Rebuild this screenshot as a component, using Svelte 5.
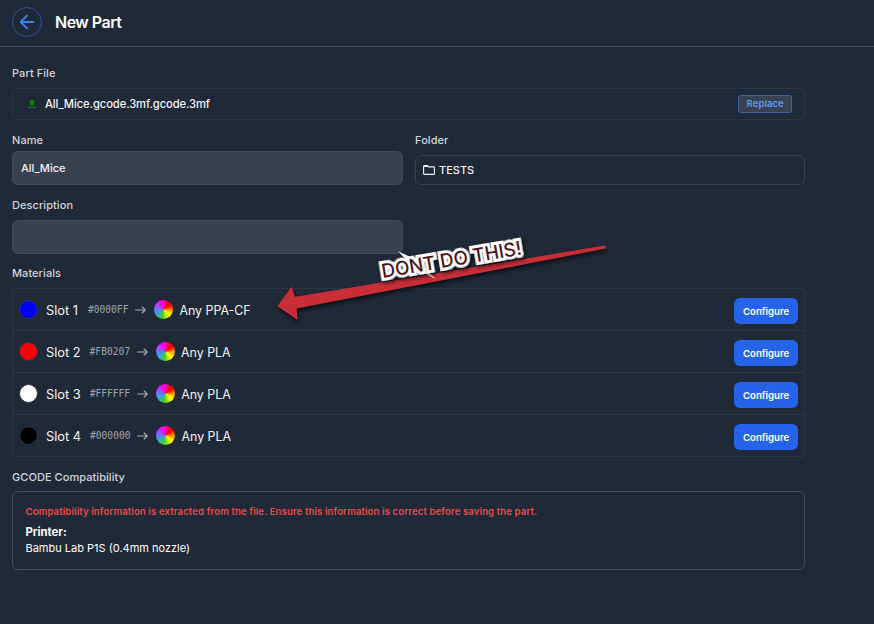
<script>
  const slots = [
    { name: 'Slot 1', color: '#0000FF', material: 'Any PPA-CF' },
    { name: 'Slot 2', color: '#FB0207', material: 'Any PLA' },
    { name: 'Slot 3', color: '#FFFFFF', material: 'Any PLA' },
    { name: 'Slot 4', color: '#000000', material: 'Any PLA' }
  ];
</script>

<div class="page">
  <header>
    <button class="back" aria-label="Back">
      <svg width="16" height="16" viewBox="0 0 16 16" fill="none" stroke="#3b82f6" stroke-width="1.9" stroke-linecap="round" stroke-linejoin="round">
        <path d="M14.6 8H1.7M8 1.6L1.6 8L8 14.4" />
      </svg>
    </button>
    <h1>New Part</h1>
  </header>

  <main>
    <div class="label l1">Part File</div>
    <div class="file">
      <svg width="8" height="9" viewBox="0 0 8 9" fill="#078a0b"><path d="M4 0L7.7 3.8H5.5V6.8H2.5V3.8H.3ZM0 8H8V9H0Z" /></svg>
      <span class="filename">All_Mice.gcode.3mf.gcode.3mf</span>
      <button class="replace">Replace</button>
    </div>

    <div class="columns">
      <div class="col">
        <div class="label l2">Name</div>
        <div class="input">All_Mice</div>
      </div>
      <div class="col">
        <div class="label l2">Folder</div>
        <div class="folder">
          <svg width="12" height="10" viewBox="0 0 12 10" fill="none" stroke="#f3f4f6" stroke-width="1.1" stroke-linejoin="round">
            <path d="M.6 1.3Q.6.6 1.3.6H4.4L5.6 1.9H10.7Q11.4 1.9 11.4 2.6V8.7Q11.4 9.4 10.7 9.4H1.3Q.6 9.4.6 8.7Z" />
            <path d="M.8 1.4H5" />
          </svg>
          <span>TESTS</span>
        </div>
      </div>
    </div>

    <div class="label l3">Description</div>
    <div class="input desc"></div>

    <div class="label l4">Materials</div>
    <div class="slots">
      {#each slots as slot}
        <div class="slot">
          <span class="dot" style="background: {slot.color}"></span>
          <span class="slot-name">{slot.name}</span>
          <code>{slot.color}</code>
          <svg class="arrow" width="11" height="8" viewBox="0 0 11 8" fill="none" stroke="#a7adb8" stroke-width="1.1" stroke-linecap="round" stroke-linejoin="round">
            <path d="M.6 4H10.2M7.2 1L10.2 4L7.2 7" />
          </svg>
          <span class="dot wheel"></span>
          <span class="material">{slot.material}</span>
          <button class="configure">Configure</button>
        </div>
      {/each}
    </div>

    <div class="label l5">GCODE Compatibility</div>
    <div class="compat">
      <p class="warning">Compatibility information is extracted from the file. Ensure this information is correct before saving the part.</p>
      <p class="printer">Printer:</p>
      <p class="model">Bambu Lab P1S (0.4mm nozzle)</p>
    </div>
  </main>

  <svg class="annotation" width="874" height="624" viewBox="0 0 874 624">
    <defs>
      <filter id="shadow" x="-10%" y="-30%" width="120%" height="170%">
        <feDropShadow dx="1" dy="2.5" stdDeviation="2" flood-color="#000" flood-opacity="0.75" />
      </filter>
    </defs>
    <path filter="url(#shadow)" fill="#c92f39" stroke="#c92f39" stroke-width="1" stroke-linejoin="round"
      d="M278 306L291.5 287.5L294.5 297.5L605 246L605.3 248L296 308L297 319Z" />
    <path fill="#fff" d="M398 251.3L418 260.5L435.5 279L414 268Z" />
    <g transform="translate(382.8 278) rotate(-9.6)">
      <text class="callout" filter="url(#shadow)" textLength="141.5" lengthAdjust="spacingAndGlyphs">DONT DO THIS!</text>
      <text class="callout ink" textLength="141.5" lengthAdjust="spacingAndGlyphs">DONT DO THIS!</text>
    </g>
  </svg>
</div>

<style>
  :global(body) { background: #202937; }
  .page {
    position: relative;
    width: 874px;
    height: 624px;
    overflow: hidden;
    background: #202937;
    color: #f3f4f6;
    font-family: Inter, "Liberation Sans", sans-serif;
    font-size: 11px;
  }
  * { box-sizing: border-box; }
  button { font-family: inherit; padding: 0; margin: 0; }
  header {
    display: flex;
    align-items: center;
    gap: 13px;
    height: 47px;
    padding: 0 12px 2px;
    border-bottom: 1px solid #434c5a;
  }
  .back {
    display: flex;
    align-items: center;
    justify-content: center;
    width: 30px;
    height: 30px;
    border: 1px solid #2a549c;
    border-radius: 50%;
    background: none;
  }
  h1 { margin: 0; font-size: 16px; line-height: 20px; font-weight: 600; letter-spacing: -0.5px; color: #fff; }
  main { width: 805.4px; padding-left: 12px; }
  .label { height: 14px; line-height: 15px; font-size: 11px; font-weight: 500; letter-spacing: 0.06px; color: #d1d5db; white-space: nowrap; }
  .l1 { margin-top: 19px; }
  .file {
    display: flex;
    align-items: center;
    height: 32px;
    margin-top: 8px;
    padding: 0 12px 1px 15px;
    border: 1px solid #2d3644;
    border-radius: 6px;
  }
  .filename { margin-left: 9px; font-weight: 500; font-size: 11.2px; letter-spacing: -0.08px; }
  .replace {
    width: 54.5px;
    height: 18px;
    margin-left: auto;
    border: 1px solid #3d669f;
    border-radius: 3px;
    background: #374151;
    color: #5a9cf0;
    font-size: 9.6px;
    line-height: 16px;
    font-weight: 600;
  }
  .columns { display: flex; gap: 12px; }
  .col { flex: 1; }
  .l2 { margin-top: 13px; }
  .input {
    width: 391px;
    height: 34px;
    margin-top: 4px;
    padding-left: 8px;
    border: 1px solid #434c5b;
    border-radius: 6px;
    background: #394151;
    line-height: 32px;
    font-weight: 500;
  }
  .folder {
    display: flex;
    align-items: center;
    gap: 4px;
    height: 30px;
    margin-top: 8px;
    padding-left: 7px;
    border: 1px solid #384150;
    border-radius: 6px;
    font-weight: 500;
  }
  .l3 { margin-top: 13px; }
  .desc { margin-top: 8px; }
  .l4 { margin-top: 12px; }
  .slots { margin-top: 8px; border: 1px solid #2d3644; border-radius: 3px; }
  .slot { display: flex; align-items: center; height: 42px; padding: 0 6px; }
  .slot:first-child { height: 41px; }
  .slot + .slot { border-top: 1px solid #2d3644; }
  .dot { width: 19px; height: 19px; border-radius: 50%; border: 1px solid #303a49; flex: none; }
  .slot-name { margin: 1px 0 0 8px; font-size: 12.8px; }
  code { margin-left: 9px; font-family: "DejaVu Sans Mono", "Liberation Mono", monospace; font-size: 9.6px; color: #9ca3af; }
  .slot:first-child code { margin-left: 10px; }
  .arrow { margin: 0 8px 0 7px; }
  .wheel {
    border: 0;
    background: conic-gradient(#f0d 0deg, #f00 32deg 55deg, #ff8a00 90deg, #ff0 130deg, #d8f000 150deg, #3bd12c 190deg, #3b9bf5 245deg, #8b5cf6 290deg, #f0f 335deg, #f0d 360deg);
  }
  .material { margin: 1px 0 0 6px; font-size: 12.4px; }
  .configure {
    width: 64.5px;
    height: 26px;
    margin: 3px 0 0 auto;
    border: 0;
    border-radius: 6px;
    background: #2563eb;
    color: #fff;
    font-size: 9.6px;
    font-weight: 600;
  }
  .l5 { margin-top: 13px; }
  .compat { height: 79px; margin-top: 7px; padding: 13px 12.5px; border: 1px solid #434c5a; border-radius: 6px; }
  p { margin: 0; white-space: nowrap; }
  .warning { font-size: 9.6px; line-height: 13px; font-weight: 600; letter-spacing: 0.11px; color: #e34b4d; }
  .printer { margin-top: 6px; font-weight: 700; font-size: 11.3px; line-height: 16px; color: #fff; }
  .model { line-height: 16px; color: #fff; }
  .annotation { position: absolute; left: 0; top: 0; pointer-events: none; }
  .callout { font-size: 19px; font-weight: 500; fill: #fff; stroke: #fff; stroke-width: 6px; stroke-linejoin: miter; stroke-miterlimit: 2; }
  .ink { fill: #4d1219; stroke: none; }
</style>
